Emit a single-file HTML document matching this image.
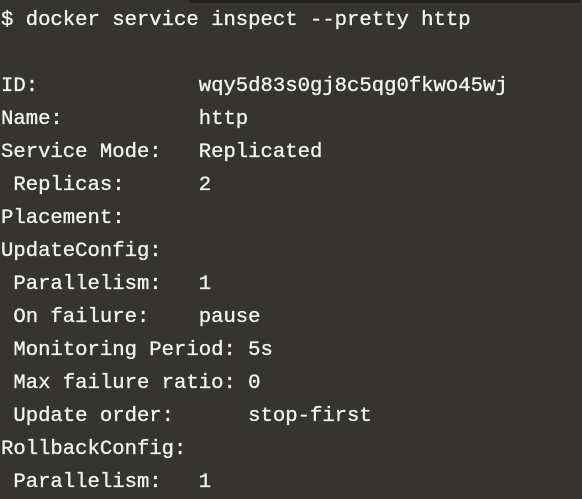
<!DOCTYPE html>
<html><head><style>
html,body{margin:0;padding:0;width:582px;height:495px;overflow:hidden;background:#363430;}
.bar{position:absolute;left:189px;top:0;width:391px;height:3px;background:#232220;}
pre{position:absolute;left:1px;top:4px;margin:0;font-family:"Liberation Mono",monospace;font-size:20.6px;line-height:33px;color:#f2f2f0;white-space:pre;-webkit-text-stroke:0.35px #f2f2f0;}
</style></head><body>
<div class="bar"></div>
<pre>$ docker service inspect --pretty http

ID:             wqy5d83s0gj8c5qg0fkwo45wj
Name:           http
Service Mode:   Replicated
 Replicas:      2
Placement:
UpdateConfig:
 Parallelism:   1
 On failure:    pause
 Monitoring Period: 5s
 Max failure ratio: 0
 Update order:      stop-first
RollbackConfig:
 Parallelism:   1</pre>
</body></html>
